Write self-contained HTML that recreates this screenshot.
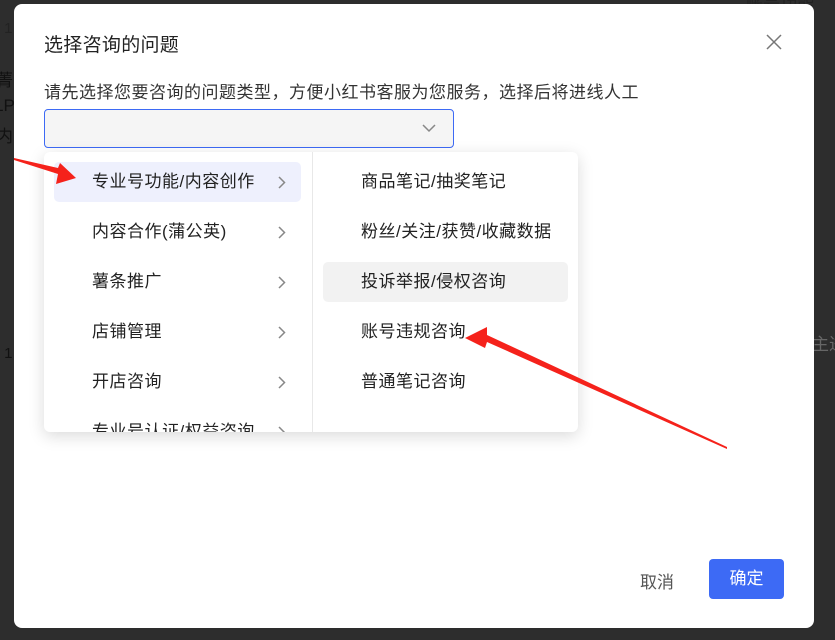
<!DOCTYPE html>
<html><head><meta charset="utf-8"><style>
*{margin:0;padding:0;box-sizing:border-box}
body{width:835px;height:640px;background:#2d2d2d;position:relative;overflow:hidden;font-family:"Liberation Sans","Noto Sans CJK SC",sans-serif;color:#333}
.bg{position:absolute;color:#111;font-size:17px;white-space:nowrap}
.dlg{position:absolute;left:14px;top:4px;width:800px;height:624px;background:#fff;border-radius:8px}
.t{position:absolute;left:44px;top:30px;font-size:19px;color:#222;letter-spacing:0.3px}
.s{position:absolute;left:44px;top:78px;font-size:17px;color:#333;letter-spacing:0.5px;white-space:nowrap}
.sel{position:absolute;left:44px;top:109px;width:410px;height:39px;background:#f5f5f5;border:1px solid #3d6af5;border-radius:4px}
.dd{position:absolute;left:44px;top:152px;width:534px;height:280px;background:#fff;border-radius:6px;box-shadow:0 4px 16px rgba(0,0,0,.15);overflow:hidden}
.div{position:absolute;left:268px;top:0;width:1px;height:280px;background:#e8e8e8}
.it{position:absolute;font-size:17px;color:#222;line-height:40px;height:40px;letter-spacing:0.5px;white-space:nowrap}
.l{left:10px;width:247px;padding-left:38px;border-radius:5px}
.r{left:279px;width:245px;padding-left:38px;border-radius:5px}
.chev{position:absolute;left:224px;top:14px}
.btn{position:absolute;left:709px;top:559px;width:75px;height:40px;background:#3d6af5;border-radius:4px;color:#fff;font-size:17px;text-align:center;line-height:40px}
.cn{position:absolute;left:640px;top:568px;font-size:17px;color:#555}
</style></head><body>
<div class="bg" style="left:-4px;top:20px;font-size:15px;color:#222">| 1</div>
<div class="bg" style="left:-4px;top:66px">菁,</div>
<div class="bg" style="left:-6px;top:96px">LP</div>
<div class="bg" style="left:-4px;top:122px">内酉</div>
<div class="bg" style="left:-4px;top:345px;font-size:15px">| 1</div>
<div class="bg" style="left:746px;top:-10px;color:#222">账号功能</div>
<div class="bg" style="left:812px;top:330px;color:#666">主进</div>
<div class="dlg"></div>
<div class="t">选择咨询的问题</div>
<svg style="position:absolute;left:765px;top:33px" width="18" height="18"><path d="M2 2L16 16M16 2L2 16" stroke="#777" stroke-width="1.5"/></svg>
<div class="s">请先选择您要咨询的问题类型，方便小红书客服为您服务，选择后将进线人工</div>
<div class="sel"><svg style="position:absolute;left:377px;top:14px" width="14" height="9"><path d="M1 1L7 7L13 1" fill="none" stroke="#888" stroke-width="1.5"/></svg></div>
<div class="dd">
<div class="div"></div>
<div class="it l" style="top:10px;background:#eef0fd">专业号功能/内容创作<svg class="chev" width="8" height="13"><path d="M1 1L6.5 6.5L1 12" fill="none" stroke="#888" stroke-width="1.5"/></svg></div>
<div class="it l" style="top:60px">内容合作(蒲公英)<svg class="chev" width="8" height="13"><path d="M1 1L6.5 6.5L1 12" fill="none" stroke="#888" stroke-width="1.5"/></svg></div>
<div class="it l" style="top:110px">薯条推广<svg class="chev" width="8" height="13"><path d="M1 1L6.5 6.5L1 12" fill="none" stroke="#888" stroke-width="1.5"/></svg></div>
<div class="it l" style="top:160px">店铺管理<svg class="chev" width="8" height="13"><path d="M1 1L6.5 6.5L1 12" fill="none" stroke="#888" stroke-width="1.5"/></svg></div>
<div class="it l" style="top:210px">开店咨询<svg class="chev" width="8" height="13"><path d="M1 1L6.5 6.5L1 12" fill="none" stroke="#888" stroke-width="1.5"/></svg></div>
<div class="it l" style="top:260px">专业号认证/权益咨询<svg class="chev" width="8" height="13"><path d="M1 1L6.5 6.5L1 12" fill="none" stroke="#888" stroke-width="1.5"/></svg></div>
<div class="it r" style="top:10px">商品笔记/抽奖笔记</div>
<div class="it r" style="top:60px">粉丝/关注/获赞/收藏数据</div>
<div class="it r" style="top:110px;background:#f2f2f2">投诉举报/侵权咨询</div>
<div class="it r" style="top:160px">账号违规咨询</div>
<div class="it r" style="top:210px">普通笔记咨询</div>
</div>
<div class="cn">取消</div>
<div class="btn">确定</div>
<svg style="position:absolute;left:0;top:0" width="835" height="640">
<polygon points="14,158 58,168 60,163 76,178 56,184 58,174 14,160" fill="#f5221b"/>
<polygon points="727,449 487,342 485,348 465,338 487,327 487,335 727,447" fill="#f5221b"/>
</svg>
</body></html>
